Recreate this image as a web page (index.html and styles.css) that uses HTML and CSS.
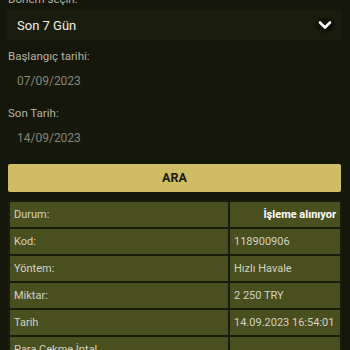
FILE: index.html
```html
<!DOCTYPE html>
<html lang="tr">
<head>
<meta charset="utf-8">
<link rel="stylesheet" href="styles.css">
</head>
<body>
<div class="page">
  <div class="label label-top">Dönem seçin:</div>
  <div class="select">
    <span class="select-text">Son 7 Gün</span>
    <span class="chev">
      <svg width="14" height="10" viewBox="0 0 14 10"><path d="M2 2.5 L7 7.5 L12 2.5" fill="none" stroke="#ffffff" stroke-width="2.6" stroke-linecap="round" stroke-linejoin="round"/></svg>
    </span>
  </div>
  <div class="field">
    <div class="label">Başlangıç tarihi:</div>
    <div class="input">07/09/2023</div>
  </div>
  <div class="field">
    <div class="label">Son Tarih:</div>
    <div class="input">14/09/2023</div>
  </div>
  <div class="btn">ARA</div>
  <table class="tbl">
    <tr><td class="k">Durum:</td><td class="v strong">İşleme alınıyor</td></tr>
    <tr><td class="k">Kod:</td><td class="v">118900906</td></tr>
    <tr><td class="k">Yöntem:</td><td class="v">Hızlı Havale</td></tr>
    <tr><td class="k">Miktar:</td><td class="v">2 250 TRY</td></tr>
    <tr><td class="k">Tarih</td><td class="v">14.09.2023 16:54:01</td></tr>
    <tr><td class="k">Para Çekme İptal</td><td class="v"></td></tr>
  </table>
</div>
</body>
</html>
```
FILE: styles.css
```css
html, body {
  margin: 0;
  padding: 0;
  background: #15170b;
  height: 100%;
  overflow: hidden;
}
body {
  font-family: Roboto, "Liberation Sans", sans-serif;
}
.page {
  padding: 0 8px;
  margin-top: -9px;
}
.label {
  height: 16px;
  line-height: 16px;
  font-size: 11.5px;
  color: #b4b4a2;
}
.label-top {
  margin-bottom: 3px;
}
.select {
  margin-left: -1px;
  margin-right: 1px;
  height: 30px;
  background: #1a1c0e;
  display: flex;
  align-items: center;
  justify-content: space-between;
  padding: 0 8px 0 10px;
  box-sizing: border-box;
}
.select-text {
  font-size: 13px;
  color: #f2f2ea;
}
.chev {
  display: flex;
  width: 16px;
  height: 12px;
  align-items: center;
  justify-content: center;
  border-radius: 50%;
  background: #111208;
  box-shadow: 0 0 3px 1px #111208;
}
.field {
  margin-top: 8px;
}
.field + .field {
  margin-top: 9px;
}
.input {
  margin-top: 2px;
  height: 30px;
  line-height: 30px;
  padding-left: 9px;
  font-size: 12px;
  color: #86867a;
  background: #16180b;
}
.btn {
  margin-top: 11px;
  margin-right: 1px;
  height: 28px;
  line-height: 28px;
  background: #cfbd66;
  border-radius: 2px;
  text-align: center;
  font-weight: bold;
  font-size: 12.5px;
  color: #1a1a0a;
}
.tbl {
  margin-top: 8px;
  width: 100%;
  border-collapse: separate;
  border-spacing: 2px;
  background: #191b0c;
}
.tbl td {
  background: #4a4f1f;
  height: 25px;
  padding: 0 4px;
  font-size: 11px;
  color: #d2d2c4;
  box-sizing: border-box;
}
.tbl td.k {
  width: 218px;
}
.tbl td.strong {
  text-align: right;
  font-weight: bold;
  color: #ffffff;
}
```
